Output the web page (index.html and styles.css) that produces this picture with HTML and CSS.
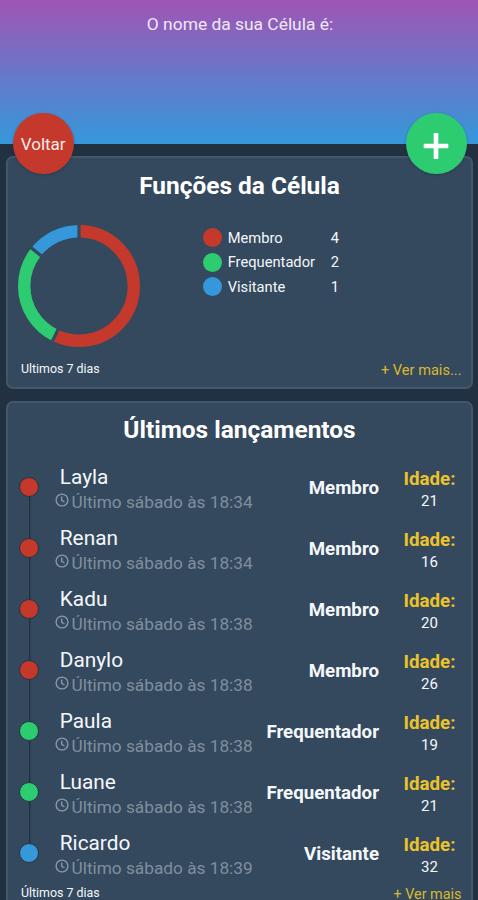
FILE: index.html
```html
<!DOCTYPE html>
<html lang="pt-BR">
<head>
<meta charset="utf-8">
<title>Célula</title>
<link rel="stylesheet" href="styles.css">
</head>
<body>
<svg class="defs" aria-hidden="true"><symbol id="clock" viewBox="0 0 14 14"><circle cx="7" cy="7" r="5.9"/><path d="M6.7 3.6v3.7l2.8 1.7"/></symbol></svg>
<header class="header">
  <p class="header-text">O nome da sua Célula é:</p>
  <button class="fab fab-back">Voltar</button>
  <button class="fab fab-add" aria-label="+"><svg viewBox="0 0 26 26"><path d="M13 0v26M.7 13h24.6"/></svg></button>
</header>
<main class="content">
  <section class="card summary">
    <h2 class="title">Funções da Célula</h2>
    <div class="chart-row">
      <svg class="donut" viewBox="-61 -61 122 122">
        <g class="ring">
          <circle class="red" r="54.8" pathLength="7" stroke-dasharray="4 3"/>
          <circle class="green" r="54.8" pathLength="7" stroke-dasharray="2 5" stroke-dashoffset="-4"/>
          <circle class="blue" r="54.8" pathLength="7" stroke-dasharray="1 6" stroke-dashoffset="-6"/>
        </g>
        <path class="gaps" d="M0 0V-62M0 0L-26.9 55.9M0 0L-48.5 -38.7"/>
      </svg>
      <ul class="legend">
        <li><i class="swatch bg-red"></i><span class="label">Membro</span><span>4</span></li>
        <li><i class="swatch bg-green"></i><span class="label">Frequentador</span><span>2</span></li>
        <li><i class="swatch bg-blue"></i><span class="label">Visitante</span><span>1</span></li>
      </ul>
    </div>
    <footer class="foot"><span class="period">Ultimos 7 dias</span><a class="more">+ Ver mais...</a></footer>
  </section>
  <section class="card latest">
    <h2 class="title">Últimos lançamentos</h2>
    <ul class="timeline">
      <li class="row"><span class="rail"><i class="dot bg-red"></i></span><div class="who"><div class="name">Layla</div><div class="when"><svg class="clock"><use href="#clock"/></svg>Último sábado às 18:34</div></div><b class="role">Membro</b><div class="age"><b>Idade:</b><span>21</span></div></li>
      <li class="row"><span class="rail"><i class="dot bg-red"></i></span><div class="who"><div class="name">Renan</div><div class="when"><svg class="clock"><use href="#clock"/></svg>Último sábado às 18:34</div></div><b class="role">Membro</b><div class="age"><b>Idade:</b><span>16</span></div></li>
      <li class="row"><span class="rail"><i class="dot bg-red"></i></span><div class="who"><div class="name">Kadu</div><div class="when"><svg class="clock"><use href="#clock"/></svg>Último sábado às 18:38</div></div><b class="role">Membro</b><div class="age"><b>Idade:</b><span>20</span></div></li>
      <li class="row"><span class="rail"><i class="dot bg-red"></i></span><div class="who"><div class="name">Danylo</div><div class="when"><svg class="clock"><use href="#clock"/></svg>Último sábado às 18:38</div></div><b class="role">Membro</b><div class="age"><b>Idade:</b><span>26</span></div></li>
      <li class="row"><span class="rail"><i class="dot bg-green"></i></span><div class="who"><div class="name">Paula</div><div class="when"><svg class="clock"><use href="#clock"/></svg>Último sábado às 18:38</div></div><b class="role">Frequentador</b><div class="age"><b>Idade:</b><span>19</span></div></li>
      <li class="row"><span class="rail"><i class="dot bg-green"></i></span><div class="who"><div class="name">Luane</div><div class="when"><svg class="clock"><use href="#clock"/></svg>Último sábado às 18:38</div></div><b class="role">Frequentador</b><div class="age"><b>Idade:</b><span>21</span></div></li>
      <li class="row"><span class="rail"><i class="dot bg-blue"></i></span><div class="who"><div class="name">Ricardo</div><div class="when"><svg class="clock"><use href="#clock"/></svg>Último sábado às 18:39</div></div><b class="role">Visitante</b><div class="age"><b>Idade:</b><span>32</span></div></li>
    </ul>
    <footer class="foot"><span class="period">Últimos 7 dias</span><a class="more">+ Ver mais</a></footer>
  </section>
</main>
</body>
</html>
```
FILE: styles.css
```css
* { box-sizing: border-box; margin: 0; padding: 0; }
html, body { height: 900px; overflow: hidden; }
body { background: #223142; color: #f4f8fb; font-family: Roboto, sans-serif; white-space: nowrap; }
ul { list-style: none; }
.defs { display: none; }

.header { position: relative; height: 144px; padding-top: 14px; background: linear-gradient(#9f55b5, #3498db); }
.header-text { text-align: center; font-size: 17.4px; line-height: 21px; padding-left: 2px; color: #f3e6f7; }
.fab { position: absolute; top: 113.4px; width: 61px; height: 61px; border: 0; border-radius: 50%; color: #fbeae8; font: 17px/61px Roboto, sans-serif; display: flex; align-items: center; justify-content: center; box-shadow: 0 1px 3px rgba(20, 35, 50, .3); }
.fab-back { left: 12.7px; padding-top: 2px; background: #c4392b; }
.fab-add { left: 405.5px; padding-top: 5px; background: #2ecc71; }
.fab svg { width: 26px; height: 26px; fill: none; stroke: #fff; stroke-width: 4.6; }

.content { padding: 12px 5px 0 6px; display: flex; flex-direction: column; gap: 12px; }
.card { background: #34495e; border: 2px solid #43576a; border-radius: 7px; }
.summary { height: 233px; }
.latest { height: 540px; }
.title { text-align: center; font-size: 24.45px; font-weight: 700; color: #fff; line-height: 30px; }
.summary .title { margin-top: 12.5px; }
.latest .title { margin-top: 12px; }

.chart-row { display: flex; margin-top: 24.3px; padding-left: 9.7px; }
.donut { width: 122px; height: 122px; }
.ring { fill: none; stroke-width: 12.4; transform: rotate(-90deg); }
.red { stroke: #c4392b; }
.green { stroke: #2ecc71; }
.blue { stroke: #3498db; }
.gaps { stroke: #34495e; stroke-width: 3.2; fill: none; }
.legend { margin: 1px 0 0 63.8px; }
.legend li { display: flex; align-items: center; height: 24.4px; font-size: 14.7px; }
.swatch { width: 19px; height: 19px; border-radius: 50%; margin-right: 5.2px; }
.label { width: 103px; }
.bg-red { background: #c4392b; }
.bg-green { background: #2ecc71; }
.bg-blue { background: #3498db; }

.foot { display: flex; justify-content: space-between; align-items: center; padding: 0 9.5px 0 13px; height: 20px; }
.summary .foot { margin-top: 13px; }
.period { font-size: 12.4px; position: relative; top: -1px; }
.more { font-size: 14.6px; color: #d9b92b; }
.latest .more { font-size: 14.4px; }
.latest .period { top: -1.5px; }

.timeline { margin-top: 12px; }
.row { display: flex; height: 61px; }
.row > * { flex: none; }
.rail { width: 42px; display: flex; align-items: center; padding: 0 0 1px 10.7px; background: linear-gradient(#22313f, #22313f) 21px 0 / 1.5px 100% no-repeat; }
.row:first-child .rail { background-size: 1.5px 50%; background-position: 21px 100%; }
.row:last-child .rail { background-size: 1.5px 50%; }
.dot { width: 20.5px; height: 20.5px; border-radius: 50%; border: 1.5px solid #283342; }
.who { width: 208px; padding-top: 7px; }
.name { font-size: 20.8px; line-height: 26px; padding-left: 9.8px; }
.when { display: flex; align-items: center; font-size: 17.25px; line-height: 24px; color: #7f8f9e; padding-left: 5px; }
.clock { width: 14px; height: 14px; margin: -4px 2.5px 0 0; fill: none; stroke: #8998a6; stroke-width: 1.4; }
.role { width: 121px; text-align: right; font-size: 18.7px; line-height: 61px; padding-top: 1px; }
.age { width: 101px; display: flex; flex-direction: column; align-items: center; padding-top: 9.5px; font-size: 15px; line-height: 20px; }
.age b { font-size: 18.7px; line-height: 24px; color: #ecc32a; }
```
